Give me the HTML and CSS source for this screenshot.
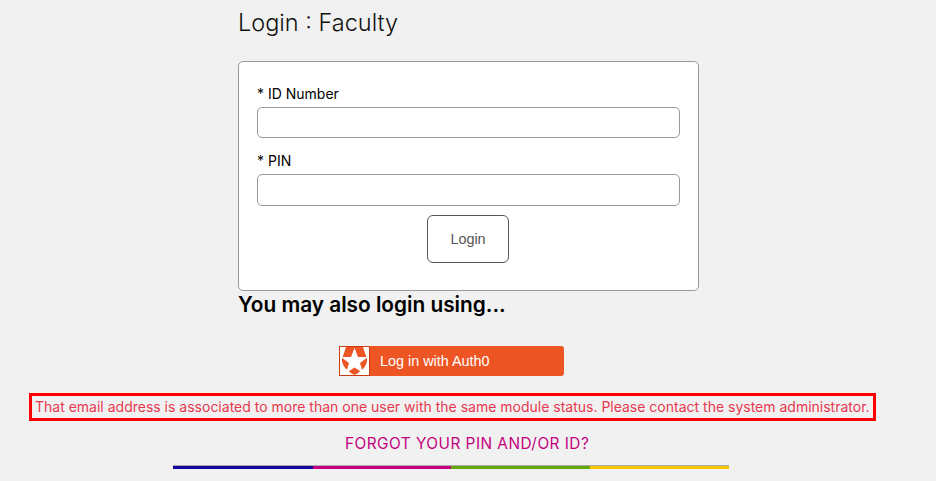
FILE: index.html
```html
<!DOCTYPE html>
<html>
  <head>
    <meta charset="utf-8">
    <title>Login : Faculty</title>
    <link rel="stylesheet" href="styles.css">
  </head>
  <body>
    <div class="login-column">
      <h1>Login : Faculty</h1>
      <form class="login-card">
        <label for="id-number">* ID Number</label>
        <input type="text" id="id-number">
        <label for="pin" class="pin-label">* PIN</label>
        <input type="password" id="pin">
        <div class="submit-row">
          <button type="button" class="login-button">Login</button>
        </div>
      </form>
      <h2>You may also login using...</h2>
      <div class="auth-row">
        <a class="auth-button" href="#">
          <span class="auth-icon">
            <svg width="29" height="28" viewBox="0 0 29 28">
              <path d="M6 0H23L27 12C28 18 21 25 14.5 28C8 25 1 18 2 12Z" fill="#ed5525"/>
              <path d="M14.5 1L18 10H28L20 16L23 26L14.5 20.5L6 26L9 16L1 10H11Z" fill="#fff"/>
            </svg>
          </span>
          <span class="auth-text">Log in with Auth0</span>
        </a>
      </div>
    </div>
    <div class="error-row">
      <span class="error-box">That email address is associated to more than one user with the same module status. Please contact the system administrator.</span>
    </div>
    <div class="forgot-row"><a href="#">FORGOT YOUR PIN AND/OR ID?</a></div>
    <div class="color-bar">
      <span class="seg-blue"></span>
      <span class="seg-pink"></span>
      <span class="seg-green"></span>
      <span class="seg-yellow"></span>
    </div>
  </body>
</html>
```

FILE: styles.css
```css
html {
  background-color: #f1f1f1;
}
body {
  margin: 0;
  height: 481px;
  overflow: hidden;
  font-family: Inter, 'Noto Sans', sans-serif;
  color: #000;
}
.login-column {
  width: 461px;
  margin: 0 auto;
  padding-left: 1px;
}
h1 {
  margin: 0;
  padding-top: 8px;
  height: 61px;
  box-sizing: border-box;
  font-size: 23.5px;
  line-height: 30px;
  font-weight: 300;
  color: #111;
}
.login-card {
  box-sizing: border-box;
  height: 230px;
  padding: 22px 18px 0;
  background-color: #fff;
  border: 1px solid #999;
  border-radius: 5px;
}
label {
  display: block;
  height: 23px;
  font-size: 14px;
  line-height: 20px;
}
.pin-label {
  margin-top: 13px;
  height: 23px;
}
input {
  display: block;
  box-sizing: border-box;
  width: 423px;
  height: 31px;
  background-color: #fff;
  border: 1px solid #999;
  border-radius: 5px;
}
#pin {
  height: 32px;
}
.submit-row {
  display: flex;
  justify-content: center;
  margin-top: 9px;
  padding-right: 1px;
}
.login-button {
  width: 82px;
  height: 48px;
  background-color: #fff;
  border: 1px solid #555;
  border-radius: 6px;
  font-family: 'Liberation Sans', sans-serif;
  font-size: 14.4px;
  color: #555;
}
h2 {
  margin: 0;
  padding-top: 1px;
  height: 55px;
  box-sizing: border-box;
  font-size: 20.8px;
  line-height: 26px;
  font-weight: 600;
}
.auth-row {
  display: flex;
  justify-content: center;
}
.auth-button {
  display: flex;
  align-items: center;
  width: 225px;
  height: 30px;
  margin-right: 34px;
  background-color: #ed5525;
  border-radius: 3px;
  color: #fff;
  text-decoration: none;
  font-family: 'Liberation Sans', sans-serif;
  font-size: 14.4px;
}
.auth-icon {
  display: flex;
  align-items: center;
  justify-content: center;
  box-sizing: border-box;
  width: 31px;
  height: 30px;
  background-color: #fff;
  border: 1px solid #c93c10;
}
.auth-text {
  margin-left: 10px;
}
.error-row {
  margin: 17px 0 0 29px;
}
.error-box {
  display: inline-block;
  box-sizing: border-box;
  width: 847px;
  height: 28px;
  padding: 0 3px;
  border: 3px solid #f00;
  font-size: 14px;
  line-height: 22px;
  white-space: nowrap;
  color: #e8384f;
}
.forgot-row {
  margin-top: 12px;
  height: 20px;
  padding-left: 345px;
  line-height: 20px;
  letter-spacing: .03em;
}
.forgot-row a {
  font-size: 15.35px;
  color: #c4007f;
  text-decoration: none;
}
.color-bar {
  display: flex;
  width: 556px;
  height: 4px;
  margin: 12px 0 0 173px;
  background-color: #aaa;
}
.color-bar span {
  height: 3px;
  margin-top: 1px;
}
.seg-blue {
  width: 140px;
  background-color: #10069f;
}
.seg-pink {
  width: 138px;
  background-color: #c6007e;
}
.seg-green {
  width: 139px;
  background-color: #64a70b;
}
.seg-yellow {
  width: 139px;
  background-color: #ffc600;
}
```
